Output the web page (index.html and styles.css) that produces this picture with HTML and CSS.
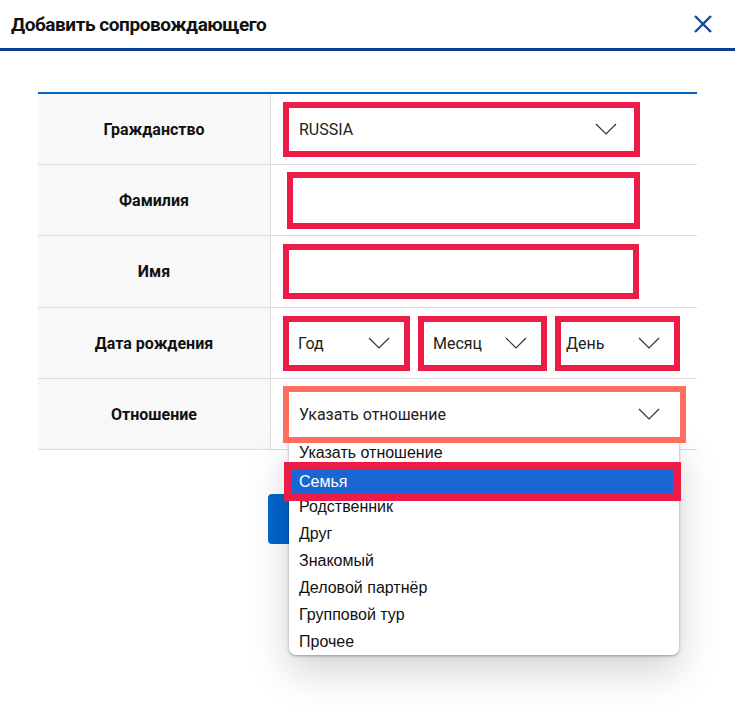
FILE: index.html
```html
<!DOCTYPE html>
<html>
<head>
    <title>Добавить сопровождающего</title>
    <link rel="stylesheet" href="styles.css">
</head>
<body>
    <div class="modal">
        <div class="modal-header">
            <h2 class="modal-title">Добавить сопровождающего</h2>
            <button type="button" class="close-btn" aria-label="Закрыть">
                <svg width="20" height="20" viewBox="0 0 20 20"><path d="M2 2 L18 18 M18 2 L2 18" stroke="#12489a" stroke-width="2.4" fill="none"/></svg>
            </button>
        </div>

        <div class="modal-body">
            <table class="form-table">
                <tr class="row-a">
                    <td class="label">Гражданство</td>
                    <td class="field">
                        <div class="mark mark-citizen">
                            <div class="select">
                                <span>RUSSIA</span>
                                <svg class="chev" width="22" height="12" viewBox="0 0 22 12"><path d="M1 1 L11 11 L21 1" stroke="#333" stroke-width="1.2" fill="none"/></svg>
                            </div>
                        </div>
                    </td>
                </tr>
                <tr class="row-a">
                    <td class="label">Фамилия</td>
                    <td class="field field-inset">
                        <div class="mark mark-surname"><div class="input"></div></div>
                    </td>
                </tr>
                <tr class="row-b">
                    <td class="label">Имя</td>
                    <td class="field">
                        <div class="mark mark-name"><div class="input"></div></div>
                    </td>
                </tr>
                <tr class="row-a">
                    <td class="label">Дата рождения</td>
                    <td class="field">
                        <div class="date-row">
                            <div class="mark mark-year">
                                <div class="select select-date">
                                    <span>Год</span>
                                    <svg class="chev" width="22" height="12" viewBox="0 0 22 12"><path d="M1 1 L11 11 L21 1" stroke="#333" stroke-width="1.2" fill="none"/></svg>
                                </div>
                            </div>
                            <div class="mark mark-month">
                                <div class="select select-date">
                                    <span>Месяц</span>
                                    <svg class="chev" width="22" height="12" viewBox="0 0 22 12"><path d="M1 1 L11 11 L21 1" stroke="#333" stroke-width="1.2" fill="none"/></svg>
                                </div>
                            </div>
                            <div class="mark mark-day">
                                <div class="select select-day">
                                    <span>День</span>
                                    <svg class="chev" width="22" height="12" viewBox="0 0 22 12"><path d="M1 1 L11 11 L21 1" stroke="#333" stroke-width="1.2" fill="none"/></svg>
                                </div>
                            </div>
                        </div>
                    </td>
                </tr>
                <tr class="row-a">
                    <td class="label">Отношение</td>
                    <td class="field">
                        <div class="mark mark-open">
                            <div class="select select-wide">
                                <span>Указать отношение</span>
                                <svg class="chev" width="22" height="12" viewBox="0 0 22 12"><path d="M1 1 L11 11 L21 1" stroke="#333" stroke-width="1.2" fill="none"/></svg>
                            </div>
                        </div>
                    </td>
                </tr>
            </table>

            <div class="actions">
                <button type="button" class="btn-primary" aria-label="Добавить"></button>
            </div>
        </div>

        <ul class="dropdown">
            <li class="option">Указать отношение</li>
            <li class="option active">Семья</li>
            <li class="option">Родственник</li>
            <li class="option">Друг</li>
            <li class="option">Знакомый</li>
            <li class="option">Деловой партнёр</li>
            <li class="option">Групповой тур</li>
            <li class="option">Прочее</li>
        </ul>
    </div>
</body>
</html>
```

FILE: styles.css
```css
body { margin: 0; background: #fff; font-family: Roboto, "Liberation Sans", sans-serif; color: #111; }
.modal { position: relative; width: 735px; height: 717px; background: #fff; overflow: hidden; }

.modal-header { height: 48px; display: flex; align-items: center; justify-content: space-between; padding: 0 22px 0 11px; border-bottom: 3px solid #0b3f8c; }
.modal-title { margin: 0; font-size: 19px; font-weight: 700; letter-spacing: -0.45px; color: #111; }
.close-btn { background: none; border: none; padding: 0; width: 20px; height: 20px; cursor: pointer; }

.modal-body { padding: 41px 38px 0 38px; }
.form-table { width: 100%; border-collapse: collapse; border-top: 2px solid #0066cc; }
.form-table td { border-bottom: 1px solid #ddd; padding: 0; vertical-align: middle; }
.row-a td { height: 70px; }
.row-b td { height: 71px; }
.label { width: 232px; background: #f8f8f8; border-right: 1px solid #ddd; text-align: center; font-size: 16px; font-weight: 700; }
.field { padding-left: 12px !important; }
.field-inset { padding-left: 16px !important; }

.mark { border: 6px solid #ec1b48; box-sizing: border-box; background: #fff; }
.mark-citizen { width: 357px; height: 55px; }
.mark-surname { width: 353px; height: 57px; }
.mark-name { width: 356px; height: 55px; }
.mark-open { position: relative; z-index: 3; width: 403px; height: 57px; border-color: #ff6e5f; }
.date-row { display: flex; gap: 8px; }
.mark-year { width: 127px; height: 55px; }
.mark-month { width: 129px; height: 55px; }
.mark-day { width: 125px; height: 55px; }

.select { height: 100%; display: flex; align-items: center; justify-content: space-between; padding: 0 17px 0 10px; font-size: 16px; color: #222; }
.select-date { padding: 0 14px 0 9px; }
.select-day { padding: 0 14px 0 5px; }
.select-wide { padding: 0 20px 0 10px; }
.chev { flex: none; }
.input { height: 100%; }

.actions { padding: 44px 0 0 230px; }
.btn-primary { width: 200px; height: 50px; background: #0066cc; border: none; border-radius: 4px; }

.dropdown { position: absolute; z-index: 2; left: 289px; top: 439px; width: 390px; margin: 0; padding: 0; list-style: none; background: #fff; border-radius: 0 0 7px 7px; box-shadow: 0 1px 3px rgba(0,0,0,0.35), 0 16px 40px rgba(0,0,0,0.18); font-family: "Liberation Sans", Arial, sans-serif; font-size: 16px; color: #111; }
.option { height: 27px; line-height: 27px; padding-left: 10px; }
.option.active { height: 23px; line-height: 23px; margin: 4px 6px 0 3px; padding-left: 7px; background: #1a66d2; color: #fff; outline: 8px solid #ec1b48; }
```
